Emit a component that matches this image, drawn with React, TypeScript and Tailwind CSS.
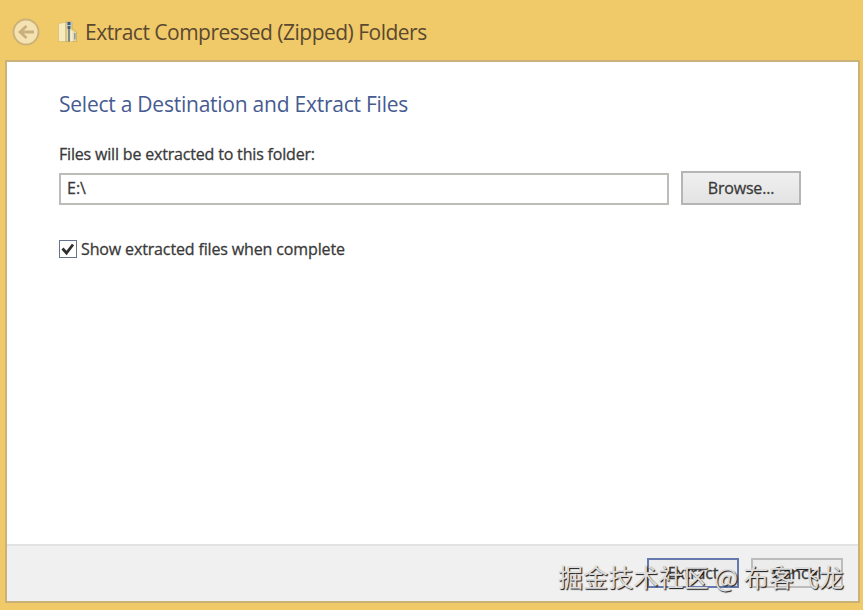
import { useState } from 'react'

const BackIcon = () => (
  <svg width="28" height="28" viewBox="0 0 28 28" fill="none" className="shrink-0">
    <circle cx="14" cy="14" r="12.5" fill="#f4e2b2" stroke="#cdb278" strokeWidth="2" />
    <path d="M22 14H8.500M14.500 8L8 14l6.500 6" stroke="#c9b07c" strokeWidth="2.800" />
  </svg>
)

const ZipFolderIcon = () => (
  <svg width="22" height="22" viewBox="0 0 22 22" fill="none" className="shrink-0">
    <path d="M1.500 2.500L9 1v19.500H1.500z" fill="#f6ebbd" stroke="#d9bd72" strokeWidth="0.8" />
    <path d="M9 1h6v7l4.500 3v9.500H9z" fill="#ecd9a0" stroke="#c5a962" strokeWidth="0.8" />
    <path d="M10 1h5v4h-5z" fill="#b9c7cd" />
    <path d="M14.500 10v10.500" stroke="#f3eed6" strokeWidth="2" />
    <path d="M12 1v7" stroke="#3f5f80" strokeWidth="3" strokeDasharray="3 1" />
    <path d="M12 8v12.500" stroke="#7f8a8a" strokeWidth="2" />
    <path d="M17.800 12v6.500" stroke="#8b9eb0" strokeWidth="1.600" />
  </svg>
)

export default function App() {
  const [path, setPath] = useState('E:\\')
  const [showFiles, setShowFiles] = useState(true)

  return (
    <div className="relative flex h-[610px] w-[863px] flex-col overflow-hidden bg-[#f0ca69] pr-[3px] pb-[7px] pl-[5px] font-['Open_Sans','Noto_Sans',sans-serif] text-[#3a3a3a]">
      {/* Title bar */}
      <header className="flex h-[60px] shrink-0 items-center pt-1 pl-[7px] text-[#5a4830]">
        <BackIcon />
        <span className="ml-[17px] flex">
          <ZipFolderIcon />
        </span>
        <h1 className="ml-[6px] text-[21px] leading-none font-normal tracking-[-0.51px] whitespace-nowrap">
          Extract Compressed (Zipped) Folders
        </h1>
      </header>

      <div className="flex min-h-0 flex-1 flex-col border-2 border-t-[#cbb27a] border-r-[#cbb27a] border-b-[#c9b078] border-l-[#cbb27a] bg-white">
        <main className="flex-1 pl-[52px]">
          <h2 className="mt-[30px] text-[21px] leading-[24px] tracking-[-0.24px] whitespace-nowrap text-[#465b90]">
            Select a Destination and Extract Files
          </h2>
          <p className="mt-[28px] text-[16px] leading-[20px] tracking-[-0.18px] whitespace-nowrap [-webkit-text-stroke:0.3px_#3a3a3a]">
            Files will be extracted to this folder:
          </p>
          <div className="mt-[7px] flex items-center gap-[12px]">
            <input
              value={path}
              onChange={(e) => setPath(e.target.value)}
              className="mt-px h-[32px] w-[610px] border-2 border-[#bcbcb8] bg-white px-[6px] pb-[2px] text-[16px] outline-none [-webkit-text-stroke:0.3px_#3a3a3a]"
            />
            <button className="h-[34px] w-[120px] border-2 border-[#b5b5b5] bg-linear-to-b from-[#f0f0f0] to-[#e3e3e3] text-[16px] leading-none tracking-[-0.2px] whitespace-nowrap [-webkit-text-stroke:0.3px_#3a3a3a]">
              Browse...
            </button>
          </div>
          <label className="mt-[34px] flex items-center gap-[4px]">
            <input
              type="checkbox"
              checked={showFiles}
              onChange={(e) => setShowFiles(e.target.checked)}
              className="peer sr-only"
            />
            <span className="flex size-[18px] items-center justify-center border border-[#66738c] bg-white">
              {showFiles && (
                <svg width="14" height="14" viewBox="0 0 14 14" fill="none">
                  <path d="M1.500 6.500l4 4.500L12 2.500" stroke="#2f2f2f" strokeWidth="2.800" />
                </svg>
              )}
            </span>
            <span className="text-[16px] leading-[20px] tracking-[-0.14px] whitespace-nowrap [-webkit-text-stroke:0.3px_#3a3a3a]">
              Show extracted files when complete
            </span>
          </label>
        </main>

        <footer className="flex h-[57px] shrink-0 items-start justify-end gap-[12px] border-t-2 border-[#e2e2e2] bg-[#f0f0f0] pt-[12px] pr-[15px]">
          <button className="h-[30px] w-[92px] border-2 border-[#6479ae] bg-[#ececec] text-[16px] leading-none tracking-[-0.15px] [-webkit-text-stroke:0.3px_#3a3a3a]">
            Extract
          </button>
          <button className="h-[30px] w-[92px] border-2 border-[#bcbcbc] bg-[#ececec] text-[16px] leading-none tracking-[-0.15px] [-webkit-text-stroke:0.3px_#3a3a3a]">
            Cancel
          </button>
        </footer>
      </div>

      {/* Watermark */}
      <div className="pointer-events-none absolute top-[560px] left-[558px] font-['Noto_Sans_CJK_SC',sans-serif] text-[25.1px] leading-[32px] whitespace-nowrap text-[#dcdcdc] [text-shadow:1px_1px_1px_#111]">
        掘金技术社区 @ 布客飞龙
      </div>
    </div>
  )
}
